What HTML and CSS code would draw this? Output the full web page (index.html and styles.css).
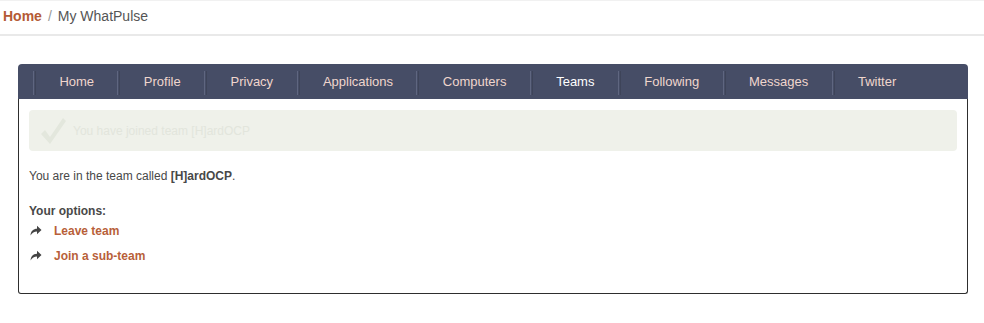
FILE: index.html
```html
<!DOCTYPE html>
<html>
<head>
  <title>My WhatPulse</title>
  <link rel="stylesheet" href="styles.css">
</head>
<body>
  <div class="breadcrumb">
    <a href="#" class="crumb-home">Home</a>
    <span class="crumb-sep">/</span>
    <span class="crumb-current">My WhatPulse</span>
  </div>

  <div class="panel">
    <ul class="tabs">
      <li><a href="#">Home</a></li>
      <li><a href="#">Profile</a></li>
      <li><a href="#">Privacy</a></li>
      <li><a href="#">Applications</a></li>
      <li><a href="#">Computers</a></li>
      <li class="active"><a href="#">Teams</a></li>
      <li><a href="#">Following</a></li>
      <li><a href="#">Messages</a></li>
      <li><a href="#">Twitter</a></li>
    </ul>
    <div class="panel-body">
      <div class="notice">
        <svg class="notice-icon" width="28" height="30" viewBox="0 0 28 30">
          <path d="M2 18 L6 14 L11 21 L24 2 L27 5 L11 28 Z" fill="#e3e7dd"/>
        </svg>
        <span>You have joined team [H]ardOCP</span>
      </div>
      <p class="team-line">You are in the team called <b>[H]ardOCP</b>.</p>
      <p class="options-title">Your options:</p>
      <ul class="options">
        <li>
          <svg class="arrow" width="12" height="11" viewBox="0 0 12 11">
            <path d="M0.5 10.5 C0.8 6 3.5 3.8 7 3.8 V0.8 L11.5 5 L7 9.2 V6.4 C4.2 6.4 2.2 7.6 0.5 10.5 Z" fill="#444"/>
          </svg>
          <a href="#">Leave team</a>
        </li>
        <li>
          <svg class="arrow" width="12" height="11" viewBox="0 0 12 11">
            <path d="M0.5 10.5 C0.8 6 3.5 3.8 7 3.8 V0.8 L11.5 5 L7 9.2 V6.4 C4.2 6.4 2.2 7.6 0.5 10.5 Z" fill="#444"/>
          </svg>
          <a href="#">Join a sub-team</a>
        </li>
      </ul>
    </div>
  </div>
</body>
</html>
```

FILE: styles.css
```css
body {
  margin: 0;
  font-family: "Liberation Sans", Arial, sans-serif;
  font-size: 12px;
  color: #484848;
  background: #fff;
}
a {
  text-decoration: none;
}
.breadcrumb {
  display: flex;
  align-items: center;
  height: 30px;
  padding: 0 0 3px 3px;
  border-top: 1px solid #f1f1f1;
  border-bottom: 2px solid #e9e9e9;
  font-size: 14px;
}
.crumb-home {
  color: #b45a35;
  font-weight: bold;
}
.crumb-sep {
  color: #999;
  margin: 0 6px;
}
.crumb-current {
  color: #555;
}
.panel {
  width: 950px;
  margin: 28px 0 0 18px;
}
.tabs {
  display: flex;
  margin: 0;
  padding: 0 0 0 15px;
  list-style: none;
  height: 35px;
  background: #464d66;
  border-radius: 4px 4px 0 0;
}
.tabs li {
  display: flex;
  align-items: center;
}
.tabs li::before {
  content: "";
  width: 1px;
  height: 24px;
  border-left: 1px solid #5f6680;
  border-right: 1px solid #3e4459;
  margin-top: 2px;
}
.tabs a {
  display: block;
  padding: 1px 23.4px 0 23.4px;
  font-size: 13px;
  line-height: 34px;
  color: #f0d6cd;
}
.tabs .active a {
  color: #fff;
}
.panel-body {
  border: 1px solid #2e2e2e;
  border-top: none;
  border-radius: 0 0 3px 3px;
  padding: 11px 10px 25px 10px;
}
.notice {
  display: flex;
  align-items: center;
  height: 41px;
  padding-left: 10px;
  background: #eff1ea;
  border-radius: 4px;
  color: #e2e5dc;
}
.notice-icon {
  margin-right: 6px;
}
.team-line {
  margin: 18px 0 0 0;
}
.options-title {
  margin: 21px 0 0 0;
  font-weight: bold;
}
.options {
  list-style: none;
  margin: 0;
  padding: 0;
}
.options li {
  display: flex;
  align-items: center;
  height: 25px;
}
.arrow {
  margin: 0 12px 0 1px;
}
.options a {
  color: #b85f3a;
  font-weight: bold;
}
```
